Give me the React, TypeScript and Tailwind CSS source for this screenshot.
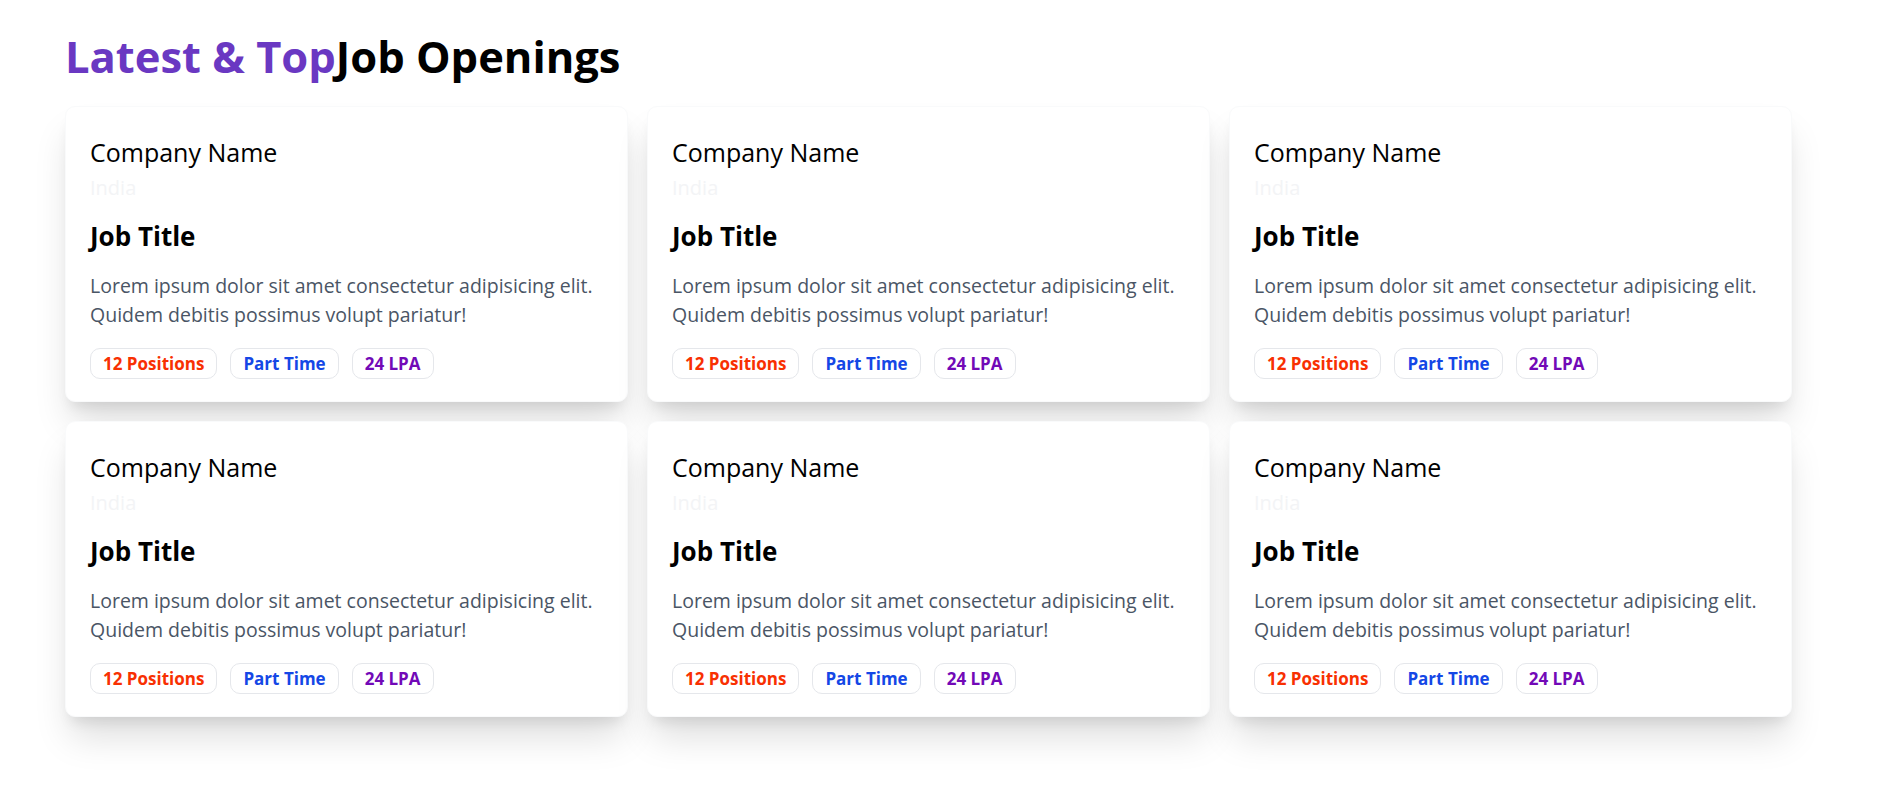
const jobs = [1, 2, 3, 4, 5, 6]

function Badge({ children, color }: { children: string; color: string }) {
  return (
    <span
      className={`inline-flex items-center rounded-[10px] border border-gray-200 px-[12px] py-[2px] text-[17px] font-bold leading-[25px] ${color}`}
    >
      {children}
    </span>
  )
}

function JobCard() {
  return (
    <div className="rounded-[10px] border border-gray-50 bg-white px-[24px] pt-[28px] pb-[22px] shadow-[0_25px_36px_-5px_rgba(0,0,0,0.13),0_10px_14px_-6px_rgba(0,0,0,0.1)]">
      <div>
        <h2 className="text-[25px] leading-[35px] text-black">Company Name</h2>
        <p className="mt-[3px] text-[20px] leading-[30px] text-gray-100">India</p>
      </div>
      <div>
        <h3 className="mt-[16px] text-[26px] font-bold leading-[35px] text-black">
          Job Title
        </h3>
        <p className="mt-[17px] text-[19.5px] leading-[29px] text-gray-600">
          Lorem ipsum dolor sit amet consectetur adipisicing elit. Quidem
          debitis possimus volupt pariatur!
        </p>
      </div>
      <div className="mt-[19px] flex items-center gap-[13px]">
        <Badge color="text-[#F83002]">12 Positions</Badge>
        <Badge color="text-blue-700">Part Time</Badge>
        <Badge color="text-[#7209b7]">24 LPA</Badge>
      </div>
    </div>
  )
}

export default function App() {
  return (
    <div className="min-h-screen bg-white font-['Open_Sans',sans-serif]">
      <div className="pl-[65px] pr-[85px] pt-[32px]">
        <h1 className="text-[43.5px] font-bold leading-[50px] text-black">
          <span className="text-[#6A38C2]">Latest &amp; Top</span>Job Openings
        </h1>
        <div className="mt-[24px] grid grid-cols-3 gap-[19px]">
          {jobs.map((j) => (
            <JobCard key={j} />
          ))}
        </div>
      </div>
    </div>
  )
}
